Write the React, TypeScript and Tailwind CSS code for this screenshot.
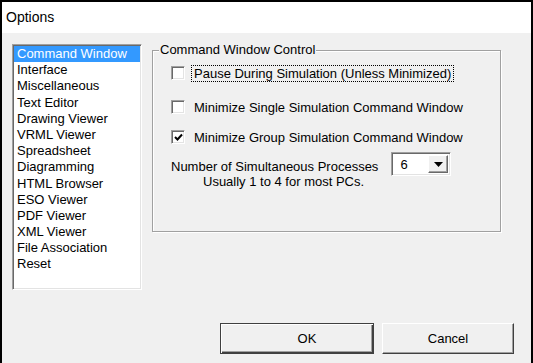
import React from 'react';

const items = [
  'Command Window',
  'Interface',
  'Miscellaneous',
  'Text Editor',
  'Drawing Viewer',
  'VRML Viewer',
  'Spreadsheet',
  'Diagramming',
  'HTML Browser',
  'ESO Viewer',
  'PDF Viewer',
  'XML Viewer',
  'File Association',
  'Reset',
];

const CheckBox = ({ checked }: { checked?: boolean }) => (
  <span className="w-[14px] h-[14px] shrink-0 bg-white border border-t-[#a0a0a0] border-l-[#a0a0a0] border-b-white border-r-white shadow-[inset_1px_1px_0_#696969,inset_-1px_-1px_0_#e3e3e3] flex items-center justify-center">
    {checked && (
      <svg width="9" height="9" viewBox="0 0 9 9">
        <path d="M1 4 L3.5 6.5 L8 1.5" stroke="#000" strokeWidth="2" fill="none" />
      </svg>
    )}
  </span>
);

const Button = ({ label, isDefault }: { label: string; isDefault?: boolean }) => (
  <button
    className={
      'h-[31px] bg-[#f0f0f0] text-[13px] text-black flex items-center justify-center ' +
      (isDefault
        ? 'w-[154px] pl-[20px] border border-[#404040] shadow-[inset_1px_1px_0_#fff,inset_-1px_-1px_0_#404040,inset_-2px_-2px_0_#a0a0a0]'
        : 'w-[132px] border border-t-white border-l-white border-b-[#404040] border-r-[#404040] shadow-[inset_-1px_-1px_0_#a0a0a0]')
    }
  >
    {label}
  </button>
);

export default function App() {
  return (
    <div
      className="w-[533px] h-[363px] bg-white overflow-hidden text-black"
      style={{ fontFamily: '"Liberation Sans", Arial, sans-serif' }}
    >
      <div className="w-[533px] h-[363px] border-l-2 border-t-2 border-r-2 border-black flex flex-col">
        <div className="h-[31px] shrink-0 bg-white flex items-center pl-[4px] text-[14px]">Options</div>

        <div className="flex-1 bg-[#f0f0f0] flex flex-col">
          <div className="flex mt-[11px]">
            <div className="ml-[10px] w-[130px] h-[246px] bg-white border border-t-[#a0a0a0] border-l-[#a0a0a0] border-b-white border-r-white shadow-[inset_1px_1px_0_#696969,inset_-1px_-1px_0_#e3e3e3] pt-[1px] px-[1px]">
              {items.map((it, i) => (
                <div
                  key={it}
                  className={
                    'h-[16.2px] leading-[16px] text-[13px] pl-[3px] whitespace-nowrap ' +
                    (i === 0 ? 'bg-[#3399ff] text-white' : '')
                  }
                >
                  {it}
                </div>
              ))}
            </div>

            <div className="ml-[10px] mt-[6px] w-[349px] h-[182px] relative border border-[#a0a0a0] shadow-[inset_1px_1px_0_#fff,1px_1px_0_#fff]">
              <span className="absolute left-[6px] -top-[9px] bg-[#f0f0f0] px-[1px] text-[13px] leading-[16px]">
                Command Window Control
              </span>

              <div className="pl-[18px] pt-[15px] flex flex-col text-[13px]">
                <div className="flex items-center h-[14px]">
                  <CheckBox />
                  <span className="ml-[7px] px-[2px] leading-[15px] outline-1 outline-dotted outline-black outline-offset-0">
                    Pause During Simulation (Unless Minimized)
                  </span>
                </div>
                <div className="flex items-center h-[14px] mt-[20px]">
                  <CheckBox />
                  <span className="ml-[9px] leading-[15px]">Minimize Single Simulation Command Window</span>
                </div>
                <div className="flex items-center h-[14px] mt-[16px]">
                  <CheckBox checked />
                  <span className="ml-[9px] leading-[15px]">Minimize Group Simulation Command Window</span>
                </div>

                <div className="flex mt-[8px]">
                  <div className="flex flex-col pt-[7px] leading-[15px]">
                    <span>Number of Simultaneous Processes</span>
                    <span className="pl-[32px]">Usually 1 to 4 for most PCs.</span>
                  </div>
                  <div className="ml-[13px] w-[60px] h-[24px] bg-white border border-t-[#a0a0a0] border-l-[#a0a0a0] border-b-white border-r-white shadow-[inset_1px_1px_0_#696969,inset_-1px_-1px_0_#e3e3e3] flex items-center p-[2px]">
                    <span className="flex-1 pl-[6px] leading-[15px]">6</span>
                    <span className="w-[20px] h-[18px] bg-[#f0f0f0] border border-t-white border-l-white border-b-[#696969] border-r-[#696969] shadow-[inset_-1px_-1px_0_#a0a0a0] flex items-center justify-center">
                      <svg width="9" height="5" viewBox="0 0 9 5">
                        <path d="M0 0 H9 L4.5 5 Z" fill="#000" />
                      </svg>
                    </span>
                  </div>
                </div>
              </div>
            </div>
          </div>

          <div className="mt-auto mb-[9px] flex justify-end gap-[8px] pr-[17px]">
            <Button label="OK" isDefault />
            <Button label="Cancel" />
          </div>
        </div>
      </div>
    </div>
  );
}
